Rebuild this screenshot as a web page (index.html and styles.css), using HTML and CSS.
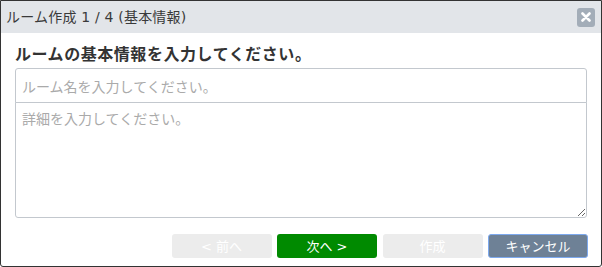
FILE: index.html
```html
<!DOCTYPE html>
<html lang="ja">
<head>
<meta charset="utf-8">
<link rel="stylesheet" href="styles.css">
</head>
<body>
<div class="dialog">
  <div class="titlebar">
    <span class="title">ルーム作成 1 / 4 (基本情報)</span>
    <button class="close" type="button" aria-label="閉じる">
      <svg width="10" height="10" viewBox="0 0 10 10"><path d="M1.5 1.5 L8.5 8.5 M8.5 1.5 L1.5 8.5" stroke="#fff" stroke-width="2.6" stroke-linecap="round"/></svg>
    </button>
  </div>
  <div class="content">
    <h2 class="heading">ルームの基本情報を入力してください。</h2>
    <div class="fields">
      <input class="name" type="text" placeholder="ルーム名を入力してください。">
      <textarea class="detail" placeholder="詳細を入力してください。"></textarea>
    </div>
    <div class="actions">
      <button class="btn btn-disabled" type="button">&lt; 前へ</button>
      <button class="btn btn-next" type="button">次へ &gt;</button>
      <button class="btn btn-disabled" type="button">作成</button>
      <button class="btn btn-cancel" type="button">キャンセル</button>
    </div>
  </div>
</div>
</body>
</html>
```
FILE: styles.css
```css
* { box-sizing: border-box; }
html, body { margin: 0; padding: 0; background: #fff; }
body {
  font-family: "DejaVu Sans", "Noto Sans CJK JP", sans-serif;
  color: #333;
}
.dialog {
  width: 602px;
  height: 267px;
  border: 1px solid #333;
  border-radius: 0 0 3px 3px;
  display: flex;
  flex-direction: column;
  overflow: hidden;
}
.titlebar {
  height: 32px;
  background: #e2e5e9;
  display: flex;
  align-items: center;
  justify-content: space-between;
  padding: 0 6px 0 5px;
}
.title {
  font-size: 14px;
  letter-spacing: 0.2px;
  color: #3a3a3a;
  line-height: 1;
}
.close {
  width: 18px;
  height: 19px;
  border: none;
  border-radius: 3px;
  background: #a3adb8;
  padding: 0;
  display: flex;
  align-items: center;
  justify-content: center;
}
.content {
  padding: 8px 14px 0 14px;
  display: flex;
  flex-direction: column;
}
.heading {
  margin: 0;
  font-family: "Noto Sans CJK JP", sans-serif;
  font-size: 16px;
  letter-spacing: 0.55px;
  font-weight: bold;
  line-height: 24px;
  color: #333;
}
.fields {
  margin-top: 3px;
  display: flex;
  flex-direction: column;
}
.name, .detail {
  font-family: "Noto Sans CJK JP", sans-serif;
  font-size: 14px;
  color: #333;
  border: 1px solid #c3c8ce;
  width: 572px;
  padding: 5px 6px;
  outline: none;
}
.name::placeholder, .detail::placeholder { color: #aaaaaa; }
.name {
  height: 35px;
  border-radius: 3px 3px 0 0;
}
.detail {
  height: 116px;
  margin-top: -1px;
  border-radius: 0 0 3px 3px;
  resize: vertical;
  padding-top: 5px;
}
.actions {
  margin-top: 16px;
  margin-right: -1px;
  display: flex;
  justify-content: flex-end;
  gap: 5.5px;
}
.btn {
  width: 100px;
  height: 24px;
  border-radius: 3px;
  border: 1px solid transparent;
  font-family: "DejaVu Sans", "Noto Sans CJK JP", sans-serif;
  font-size: 13px;
  font-weight: normal;
  color: #fff;
  padding: 0;
  line-height: 1;
}
.btn-disabled { background: #ececec; color: #fff; }
.btn-next { background: #008a00; }
.btn-cancel { background: #6e8196; border-color: #7da9ee; }
```
